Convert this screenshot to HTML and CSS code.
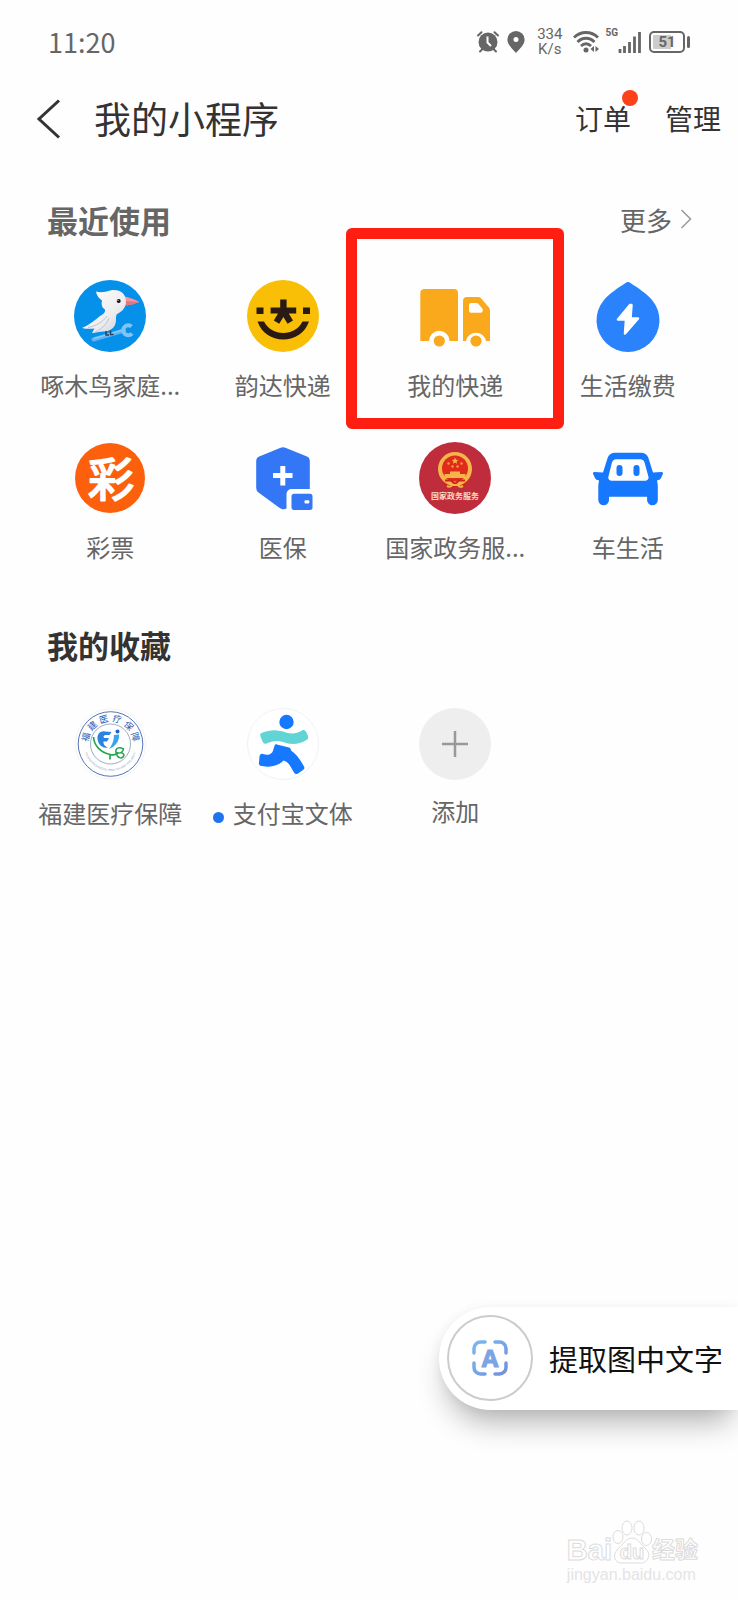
FILE: index.html
```
<!DOCTYPE html>
<html lang="zh-CN">
<head>
    <meta charset="utf-8">
    <meta name="viewport" content="width=device-width, initial-scale=1">
    <title>我的小程序</title>
    <link rel="stylesheet" href="styles.css">
</head>
<body>
<div class="status-bar">
    <div class="clock">11:20</div>
    <div class="status-icons">
        <svg class="alarm" width="22" height="22" viewBox="0 0 22 22">
            <circle cx="11" cy="11" r="9.5" fill="#666"/>
            <path d="M1 4.5 4.5 1.2M21 4.5 17.5 1.2M3 20.5 5.5 18M19 20.5 16.5 18" stroke="#666" stroke-width="2" fill="none" stroke-linecap="round"/>
            <path d="M10.5 5.5V11.5L14 15" stroke="#fff" stroke-width="2" fill="none"/>
        </svg>
        <svg class="pin" width="18" height="22" viewBox="0 0 18 22">
            <path d="M9 0a8.6 8.6 0 0 1 8.6 8.8C17.6 14 12 18.5 9 22 6 18.5.4 14 .4 8.8A8.6 8.6 0 0 1 9 0z" fill="#666"/>
            <circle cx="9" cy="8.5" r="2.5" fill="#fff"/>
        </svg>
        <div class="speed"><span>334</span><span>K/s</span></div>
        <svg class="wifi" width="26" height="22" viewBox="0 0 26 22">
            <g fill="none" stroke="#666" stroke-width="2.8">
                <path d="M1 6.5C8-.2 18-.2 25 6.5"/>
                <path d="M4.5 11C9.5 6 16.5 6 21.5 11"/>
                <path d="M8 15C11 12 15 12 18 15"/>
            </g>
            <circle cx="13" cy="19" r="2.5" fill="#666"/>
            <path d="M21 15v6l-3.5-3zM22.5 15v6l3.5-3z" fill="#666"/>
        </svg>
        <div class="network">5G</div>
        <svg class="signal" width="23" height="22" viewBox="0 0 23 22">
            <path d="M2 22v-4M6.5 22v-7M11.5 22V11M16.5 22V5.5M21.5 22V1" stroke="#666" stroke-width="2.8" fill="none"/>
        </svg>
        <div class="battery"><span>51</span></div>
    </div>
</div>

<header class="nav">
    <button class="back" aria-label="返回">
        <svg width="24" height="40" viewBox="0 0 24 40">
            <path d="M23 1.5 3 20 23 38.500" fill="none" stroke="#333" stroke-width="3"/>
        </svg>
    </button>
    <h1>我的小程序</h1>
    <button class="nav-btn has-dot">订单</button>
    <button class="nav-btn">管理</button>
</header>

<main>
    <section>
        <div class="section-head">
            <h2 class="muted">最近使用</h2>
            <a class="more" href="#">更多
                <svg width="12" height="20" viewBox="0 0 12 20"><path d="M1.5 1 10.5 10 1.5 19" fill="none" stroke="#999" stroke-width="1.5"/></svg>
            </a>
        </div>
        <div class="apps">
            <a class="app" href="#">
                <svg class="icon" viewBox="0 0 72 72">
                    <defs>
                        <linearGradient id="bird" x1="0" y1="0" x2="1" y2="1">
                            <stop offset="0" stop-color="#fff"/>
                            <stop offset="0.6" stop-color="#eeeef0"/>
                            <stop offset="1" stop-color="#c9ccd2"/>
                        </linearGradient>
                    </defs>
                    <circle cx="36" cy="36" r="36" fill="#0590e9"/>
                    <path d="M19.5 59.5 50 50.5" stroke="#62b4f2" stroke-width="4" stroke-linecap="round"/>
                    <path d="M20 58.5 49 50" stroke="#9bd0f8" stroke-width="1"/>
                    <path d="M57.5 46.5a5 5 0 1 0 .5 7" fill="none" stroke="#82c4f6" stroke-width="4"/>
                    <path d="M51 16.5C56 17.5 61 19.5 65.5 22 61 23.5 57 25 51.5 25.5z" fill="#f4969f"/>
                    <path d="M51 21 65.5 22C61 23.5 57 25 51.5 25.5z" fill="#de7683"/>
                    <path d="M22 11.5C27 13 31 12 36 10.5 45 8.5 52 13 52 21.5 52 28 47.500 32 43 34 41 37 43 40 41 45 39 49 35 51.5 29.5 51.5 25 51.5 22 53 18 53L20.5 48.5C16 49 12 49 8 48 15 45 21 40 26 36 30 34 31.5 32 31 29.5 27 27 27.5 23 28 20.5 25 18.5 22.5 15.5 22 11.5z" fill="url(#bird)"/>
                    <path d="M14 47.5C22 46 29 42 33 36M21 52C28 49 33 44 35 38" fill="none" stroke="#bfc3c9" stroke-width="1"/>
                    <circle cx="44.7" cy="21" r="2" fill="#111"/>
                    <circle cx="44" cy="20.3" r=".6" fill="#fff"/>
                    <path d="M32 51v4h3M36.5 50.5v4h3" fill="none" stroke="#29405f" stroke-width="1.5"/>
                </svg>
                <span class="label">啄木鸟家庭...</span>
            </a>
            <a class="app" href="#">
                <svg class="icon" viewBox="0 0 72 72">
                    <circle cx="36" cy="36" r="36" fill="#f9bf06"/>
                    <g fill="#2a1a14">
                        <path d="M9.5 27.5h7v6.5h-7zM56 27.5h7v6.5h-7z"/>
                        <path d="M33.2 19.5h6.4v8h9.6v6h-7.4l4.2 7-5.4 3.2-4.2-6.700-4.2 6.700-5.4-3.2 4.2-7h-7.4v-6h9.6z"/>
                        <path d="M10.5 41.5h6.5C21 49 28 53 36.3 53S51.5 49 55.5 41.5H62C58 53 48 59.5 36.3 59.5S14.5 53 10.5 41.5z"/>
                    </g>
                </svg>
                <span class="label">韵达快递</span>
            </a>
            <a class="app marked" href="#">
                <svg class="icon" viewBox="0 0 72 72">
                    <path d="M5.5 9H35a4 4 0 0 1 4 4V61H30.5a10.2 10.2 0 0 0-20.4 0H1.3V13a4 4 0 0 1 4.2-4z" fill="#faa81c"/>
                    <path fill-rule="evenodd" d="M48 17H59a4 4 0 0 1 3 1.2L69.5 27a5 5 0 0 1 1.5 3.5V61H67a10.2 10.2 0 0 0-20 0H44V21a4 4 0 0 1 4-4zM52 23a2 2 0 0 0-2 2v5.7a2 2 0 0 0 2 2H61.7a2 2 0 0 0 2-2V29L59.5 24a3 3 0 0 0-2-1z" fill="#faa81c"/>
                    <circle cx="20.3" cy="61" r="5.6" fill="#faa81c"/>
                    <circle cx="57" cy="61" r="5.6" fill="#faa81c"/>
                </svg>
                <span class="label">我的快递</span>
            </a>
            <a class="app" href="#">
                <svg class="icon" viewBox="0 0 72 72">
                    <path d="M33.5 3a4 4 0 0 1 5 0C46 8 54.5 13.5 60 20A31.5 31.5 0 1 1 12 20C17.5 13.5 26 8 33.5 3z" fill="#2a83fc"/>
                    <path d="M38 25 26 39.5h8L33 53.5 46 38.5H38.5L39.5 25z" fill="#fff" stroke="#fff" stroke-width="2.5" stroke-linejoin="round"/>
                </svg>
                <span class="label">生活缴费</span>
            </a>
            <a class="app" href="#">
                <svg class="icon" viewBox="0 0 72 72">
                    <circle cx="36" cy="36" r="35" fill="#fc600c"/>
                    <text class="lottery" x="37" y="54" text-anchor="middle">彩</text>
                </svg>
                <span class="label">彩票</span>
            </a>
            <a class="app" href="#">
                <svg class="icon" viewBox="0 0 72 72">
                    <path d="M33 6a6 6 0 0 1 6 0L60 14.5a4.5 4.5 0 0 1 2.8 4V47H44.5a5 5 0 0 0-5 5V66.5C37 68 34 67 32 65.5L11.5 50.5A5.5 5.5 0 0 1 9.2 46V19a5 5 0 0 1 3-4.500z" fill="#3377f6"/>
                    <path d="M26 33.5H45.5M35.8 24v19.5" stroke="#fff" stroke-width="5"/>
                    <rect x="44.5" y="51.7" width="21" height="16.3" rx="2.5" fill="#3377f6"/>
                    <rect x="57.5" y="58.3" width="4.8" height="3.2" rx="1" fill="#fff"/>
                </svg>
                <span class="label">医保</span>
            </a>
            <a class="app" href="#">
                <svg class="icon" viewBox="0 0 72 72">
                    <circle cx="36" cy="36" r="36" fill="#bf2c3b"/>
                    <path d="M22 38 27 45H45L50 38z" fill="#d42519"/>
                    <circle cx="36" cy="27" r="17" fill="#f4b64a"/>
                    <circle cx="36" cy="26.5" r="13" fill="#df2a1c"/>
                    <path d="M36 15.5l1 2.2 2.3.2-1.7 1.6.5 2.3-2.1-1.2-2.1 1.2.5-2.3-1.7-1.6 2.3-.2z" fill="#f4b64a"/>
                    <g fill="#f4a03c">
                        <circle cx="29.5" cy="21.5" r="1.2"/>
                        <circle cx="42.5" cy="21.5" r="1.2"/>
                        <circle cx="33.5" cy="24.5" r="1.2"/>
                        <circle cx="38.5" cy="24.5" r="1.2"/>
                    </g>
                    <path d="M31 29.5H41V32h5.5v4h-21v-4H31z" fill="#f4b64a"/>
                    <path d="M26 38.5H32L36 42l4-3.5h6" fill="none" stroke="#c8251f" stroke-width="2"/>
                    <path d="M28 44c2 1 4 1 5-1h6c1 2 3 2 5 1" fill="none" stroke="#f4b64a" stroke-width="2"/>
                    <text class="gov" x="36" y="57" text-anchor="middle">国家政务服务</text>
                </svg>
                <span class="label">国家政务服...</span>
            </a>
            <a class="app" href="#">
                <svg class="icon" viewBox="0 0 72 72">
                    <path fill-rule="evenodd" d="M23 10.7H49a8 8 0 0 1 7.5 5.5L61 30.5 69.5 30c1.5 0 1.8 1 1.3 2.2L69 36c-.7 1.5-2 2-4 2.5.5 2 .8 4 .8 6V58a5.3 5.3 0 0 1-10.7 0V54.7H17V58A5.3 5.3 0 0 1 6.3 58V44.5c0-2 .3-4 .8-6C5 38 3.7 37.5 3 36L1.2 32.2C.7 31 1 30 2.5 30L11 30.5 15.5 16.2A8 8 0 0 1 23 10.7zM23.5 17.3a4 4 0 0 0-3.5 3L16.3 35a3 3 0 0 0 3 3.7H53.5a3 3 0 0 0 3-3.7L52.5 20.3a4 4 0 0 0-3.5-3z" fill="#1677ff"/>
                    <rect x="24.5" y="23" width="6" height="11" rx="3" fill="#1677ff"/>
                    <rect x="41.5" y="23" width="6" height="11" rx="3" fill="#1677ff"/>
                </svg>
                <span class="label">车生活</span>
            </a>
        </div>
    </section>

    <section>
        <div class="section-head">
            <h2>我的收藏</h2>
        </div>
        <div class="apps">
            <a class="app" href="#">
                <svg class="icon" viewBox="0 0 72 72">
                    <defs>
                        <path id="seal-arc" d="M9.5 36a27 27 0 0 0 54 0"/>
                    </defs>
                    <circle cx="36.5" cy="36" r="35" fill="#fff" stroke="#f1f3f5"/>
                    <circle cx="36.5" cy="36" r="32.3" fill="none" stroke="#5474b8" stroke-width="1"/>
                    <circle cx="36.5" cy="36" r="20" fill="none" stroke="#6f8cae" stroke-width=".7"/>
                    <g class="seal" text-anchor="middle">
                        <text x="36.5" y="13.5" transform="rotate(-74 36.5 36)">福</text>
                        <text x="36.5" y="13.5" transform="rotate(-45 36.5 36)">建</text>
                        <text x="36.5" y="13.5" transform="rotate(-15 36.5 36)">医</text>
                        <text x="36.5" y="13.5" transform="rotate(15 36.5 36)">疗</text>
                        <text x="36.5" y="13.5" transform="rotate(45 36.5 36)">保</text>
                        <text x="36.5" y="13.5" transform="rotate(74 36.5 36)">障</text>
                    </g>
                    <text class="seal-small"><textPath href="#seal-arc" startOffset="50%" text-anchor="middle">FUJIAN PROVINCIAL HEALTHCARE SECURITY</textPath></text>
                    <path d="M24 33C22 27 26 22.5 31 23.5L37.5 24 35.5 27H31.5C29 27.5 29 30 31 30H35L33 33.5H29.5C29 37 32 38.5 34 40 28 40 25 37 24 33z" fill="#2b83e0"/>
                    <path d="M40 27 45 26.5C45.5 33 42 38 35 41 38 37 40 33 40 27z" fill="#3aa3ea"/>
                    <circle cx="43.5" cy="23.5" r="2" fill="#1f63c8"/>
                    <path d="M19.5 29C20 38 27 44.5 36 46.5V51.5M36 46.5C39 47.5 41 47 43 45.5" fill="none" stroke="#25a651" stroke-width="1.7"/>
                    <path d="M42 44.5C41 40 45 38.5 49.5 41 49.5 44 46 46 42 44.5zM42.5 46C44 51 49 51 50 47 49 44.5 46 44 42.5 46z" fill="none" stroke="#25a651" stroke-width="1.5"/>
                </svg>
                <span class="label">福建医疗保障</span>
            </a>
            <a class="app" href="#">
                <svg class="icon" viewBox="0 0 72 72">
                    <circle cx="36" cy="36" r="35.5" fill="#fff" stroke="#f0f2f4"/>
                    <circle cx="39.5" cy="14" r="7.2" fill="#1677ff"/>
                    <path d="M14.5 25C24 21 31 21.5 39 24.5 45 26.5 50 25.5 55 22.5 57 21.5 58.5 22.5 59.5 24.5L61 28C61.5 30 61 31 59.5 32 52 36.5 44 37 36 34 30 32 25 33 19.5 35.5 17.5 36 16.5 35.5 15.5 33.5L13.5 28.5C13 27 13 26 14.5 25z" fill="#62d4d6"/>
                    <path d="M30 36.5 42 39.5C43.500 40 44 41 44 42.5 49 46 53 51 57 58.5 57.8 60 57.5 61 56 62L51 65.5C49 66.5 48 66 47 64.5 43.5 58 41 53.5 36.5 52.5 32 57 25 60 15 58 12.5 57.5 11.5 56.5 12 54.5L12.5 48.5C13 46.5 14 45.5 16 46 20 47.5 23 47 25.5 44L27.5 38C28 36.5 28.5 36 30 36.5z" fill="#1677ff"/>
                </svg>
                <span class="label new">支付宝文体</span>
            </a>
            <a class="app add" href="#">
                <svg class="icon" viewBox="0 0 72 72">
                    <circle cx="36" cy="36" r="36" fill="#eee"/>
                    <path d="M23 36H49M36 23V49" stroke="#999" stroke-width="2.5"/>
                </svg>
                <span class="label">添加</span>
            </a>
        </div>
    </section>
</main>

<button class="extract">
    <span class="extract-icon">
        <svg width="36" height="36" viewBox="0 0 36 36">
            <defs>
                <linearGradient id="scan" x1="0" y1="0" x2="1" y2="1">
                    <stop offset="0" stop-color="#7ab8ec"/>
                    <stop offset="1" stop-color="#7391dc"/>
                </linearGradient>
            </defs>
            <path d="M2 13V8.500A6.500 6.500 0 0 1 8.500 2H13M23 2h4.500A6.500 6.500 0 0 1 34 8.500V13M34 23v4.500A6.500 6.500 0 0 1 27.500 34H23M13 34H8.500A6.500 6.500 0 0 1 2 27.500V23" fill="none" stroke="url(#scan)" stroke-width="3.5" stroke-linecap="round"/>
            <text class="scan-a" x="18" y="27" text-anchor="middle">A</text>
        </svg>
    </span>
    提取图中文字
</button>

<div class="watermark">
    <div class="brand">
        <span>Bai</span>
        <svg width="40" height="44" viewBox="0 0 40 44">
            <g fill="#fff" stroke="#dcdcdc" stroke-width="1">
                <ellipse cx="6" cy="17" rx="5" ry="6.5"/>
                <ellipse cx="15" cy="8" rx="5" ry="7"/>
                <ellipse cx="27" cy="8" rx="5" ry="7"/>
                <ellipse cx="34.5" cy="19" rx="5" ry="6.5"/>
                <path d="M20 18C26 18 28 24 33 28 40 34 36 43 29 43H10C2 43 0 35 6 29 11 25 14 18 20 18z"/>
            </g>
            <text class="du" x="20" y="39" text-anchor="middle">du</text>
        </svg>
        <span class="cn">经验</span>
    </div>
    <div class="site">jingyan.baidu.com</div>
</div>
</body>
</html>
```
FILE: styles.css
```
* {
    box-sizing: border-box;
}

body {
    margin: 0;
    min-height: 100vh;
    position: relative;
    background-color: #fefefe;
    color: #333;
    font-family: "Noto Sans CJK SC", sans-serif;
}

h1, h2 {
    margin: 0;
}

button {
    padding: 0;
    border: none;
    background: none;
    color: inherit;
    font-family: inherit;
    cursor: pointer;
}

a {
    color: inherit;
    text-decoration: none;
}

svg {
    display: block;
    flex: none;
    overflow: visible;
}

/* status bar */
.status-bar {
    display: flex;
    justify-content: space-between;
    align-items: center;
    height: 84px;
    padding: 0 48px;
    color: #666;
}

.clock {
    padding-bottom: 2px;
    font-size: 27px;
}

.status-icons {
    display: flex;
    align-items: center;
}

.pin {
    margin-left: 8px;
}

.speed {
    display: flex;
    flex-direction: column;
    margin: 0 11px 0 12px;
    font-family: Roboto, sans-serif;
    font-size: 15px;
    line-height: 15px;
    text-align: center;
}

.network {
    align-self: flex-start;
    margin-left: 6px;
    font-family: Roboto, sans-serif;
    font-size: 10px;
    font-weight: bold;
    line-height: 12px;
}

.battery {
    position: relative;
    width: 36px;
    height: 22px;
    margin: 0 5px 0 8px;
    border: 2px solid #666;
    border-radius: 5px;
    background: linear-gradient(to right, #ccc 18px, #fff 18px) content-box;
    padding: 2px;
    font-family: Roboto, sans-serif;
    font-size: 15px;
    font-weight: bold;
    line-height: 14px;
    text-align: center;
}

.battery::after {
    content: "";
    position: absolute;
    right: -7px;
    top: 3px;
    width: 3px;
    height: 12px;
    border-radius: 2px;
    background-color: #666;
}

/* title bar */
.nav {
    display: flex;
    align-items: center;
    height: 70px;
    padding: 0 17px 0 36px;
}

.nav h1 {
    flex: 1;
    margin-left: 34px;
    padding-bottom: 2px;
    font-size: 37px;
    font-weight: normal;
}

.nav-btn {
    position: relative;
    margin-left: 34px;
    padding-bottom: 2px;
    font-size: 28px;
}

.has-dot::after {
    content: "";
    position: absolute;
    right: -7px;
    top: -8px;
    width: 16px;
    height: 16px;
    border-radius: 50%;
    background-color: #fc4019;
}

/* app lists */
.section-head {
    display: flex;
    justify-content: space-between;
    align-items: center;
    height: 58px;
    margin: 36px 46px 32px 47px;
}

section + section .section-head {
    margin-top: 52px;
    margin-bottom: 35px;
}

.section-head h2 {
    font-size: 31px;
}

.section-head .muted {
    color: #666;
}

.more {
    display: flex;
    align-items: center;
    gap: 8px;
    color: #666;
    font-size: 26px;
}

.apps {
    display: grid;
    grid-template-columns: repeat(4, 1fr);
    row-gap: 41px;
    padding: 0 24px;
}

.app {
    display: flex;
    flex-direction: column;
    align-items: center;
    gap: 17px;
    position: relative;
}

.app.add {
    gap: 15px;
}

.icon {
    width: 72px;
    height: 72px;
}

.label {
    color: #666;
    font-size: 24px;
    line-height: 32px;
    white-space: nowrap;
}

.label.new::before {
    content: "";
    display: inline-block;
    width: 11px;
    height: 11px;
    margin-right: 9px;
    border-radius: 50%;
    background-color: #1f74ee;
}

/* red frame drawn round the highlighted app */
.marked::after {
    content: "";
    position: absolute;
    inset: -52px -22px -28px -23px;
    border: 11px solid #ff1e12;
    border-radius: 6px;
    pointer-events: none;
}

.lottery {
    fill: #fff;
    stroke: #fff;
    stroke-width: 2px;
    stroke-linejoin: round;
    font-size: 46px;
}

.gov {
    fill: #fbd9c4;
    font-size: 8px;
    font-weight: bold;
}

.seal {
    fill: #2f5bb0;
    font-size: 9px;
}

.seal-small {
    fill: #8aa0c4;
    font-family: "Liberation Sans", sans-serif;
    font-size: 3px;
}

/* floating button */
.extract {
    position: absolute;
    right: 0;
    bottom: 190px;
    display: flex;
    align-items: center;
    gap: 16px;
    padding: 8px 15px 9px 8px;
    border-radius: 52px 0 0 52px;
    background-color: #fff;
    box-shadow: 0 20px 30px -8px rgba(0, 0, 0, 0.3), 0 0 12px rgba(0, 0, 0, 0.05);
    color: #111;
    font-size: 29px;
}

.extract-icon {
    display: flex;
    justify-content: center;
    align-items: center;
    width: 86px;
    height: 86px;
    border: 2px solid #ccc;
    border-radius: 50%;
}

.scan-a {
    fill: #7aa4e4;
    stroke: #7aa4e4;
    stroke-width: 1px;
    font-family: "Open Sans", sans-serif;
    font-size: 24px;
    font-weight: bold;
}

/* watermark */
.watermark {
    position: absolute;
    right: 40px;
    bottom: 14px;
    color: #fff;
    font-family: "Liberation Sans", "Noto Sans CJK SC", sans-serif;
    -webkit-text-stroke: 1px #dcdcdc;
}

.brand {
    display: flex;
    align-items: flex-end;
    font-size: 29px;
    font-weight: bold;
    line-height: 28px;
}

.brand .cn {
    font-size: 23px;
}

.du {
    fill: #fff;
    stroke: #dcdcdc;
    stroke-width: 1px;
    font-size: 20px;
}

.site {
    color: #e4e4e4;
    font-size: 16px;
    line-height: 22px;
    -webkit-text-stroke: 0;
}
```
